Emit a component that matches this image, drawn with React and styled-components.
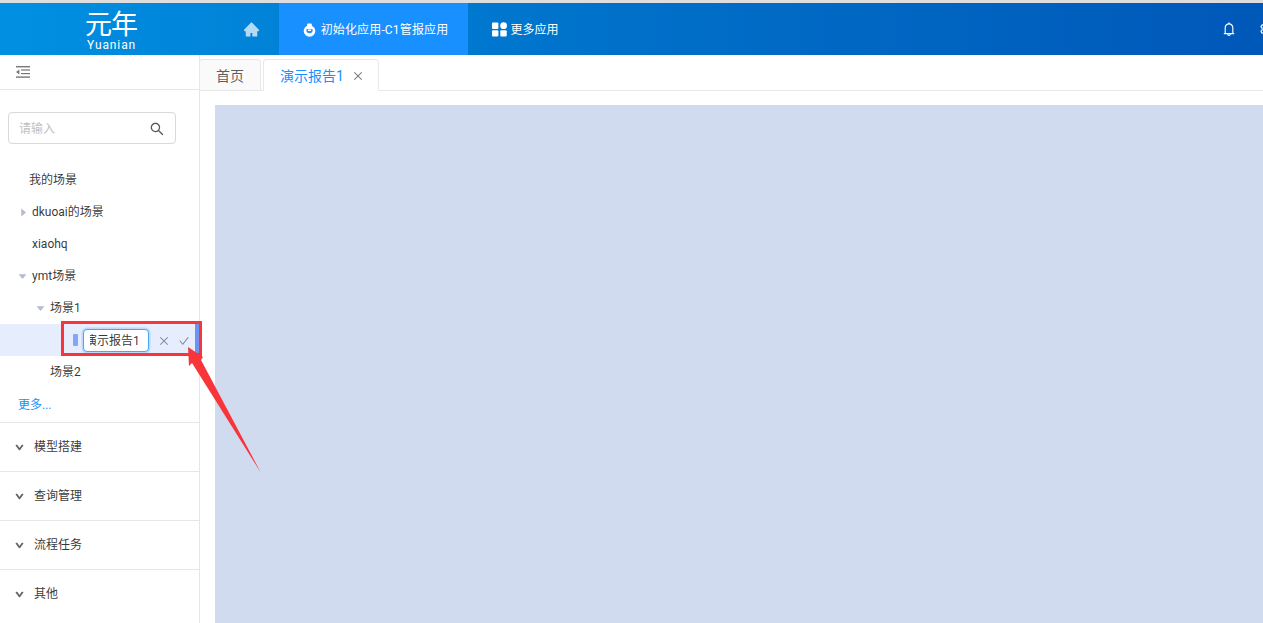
import React from 'react';
import styled, { createGlobalStyle } from 'styled-components';
import {
  AiFillHome,
  AiOutlineBell,
  AiOutlineCheck,
  AiOutlineClose,
  AiOutlineDown,
  AiOutlineSearch,
  AiOutlineSetting,
  AiFillCaretRight,
  AiFillCaretDown,
} from 'react-icons/ai';

const GlobalStyle = createGlobalStyle`
  html, body {
    margin: 0;
    padding: 0;
    height: 100%;
    overflow: hidden;
    background: #fff;
  }
  body {
    font-family: "Roboto", "Noto Sans CJK SC", sans-serif;
    font-size: 12px;
    line-height: 20px;
    color: rgba(0, 0, 0, 0.8);
  }
  * {
    box-sizing: border-box;
  }
`;

const Page = styled.div`
  position: relative;
  width: 1263px;
  height: 623px;
  overflow: hidden;
  display: flex;
  flex-direction: column;
  border-top: 3px solid #dedede;
`;

const Header = styled.header`
  flex: none;
  height: 52px;
  display: flex;
  align-items: stretch;
  color: #fff;
  background: linear-gradient(90deg, #0090e2 0%, #0070c9 50%, #0058b9 100%);
`;

const Logo = styled.svg`
  width: 229px;
  height: 52px;
  flex: none;
  display: block;
  fill: #fff;
`;

const NavItem = styled.div`
  display: flex;
  align-items: center;
  justify-content: center;
  gap: ${(p) => p.$gap || 5}px;
  width: ${(p) => p.$width}px;
  padding: 1px 0 0 ${(p) => (p.$active ? 4 : 0)}px;
  background: ${(p) => (p.$active ? '#1890ff' : 'transparent')};
  color: #fff;
  font-size: 12px;
  letter-spacing: ${(p) => (p.$active ? 0.15 : 0)}px;
  svg {
    flex: none;
  }
`;

const HomeIcon = styled(AiFillHome)`
  color: #b3dbf5;
  font-size: 17px;
  margin-right: 6px;
`;

const HeaderRight = styled.div`
  margin-left: auto;
  display: flex;
  align-items: center;
  gap: 22px;
  width: 42px;
  overflow: hidden;
  font-size: 16px;
  svg {
    flex: none;
  }
`;

const Body = styled.div`
  flex: 1;
  min-height: 0;
  display: flex;
`;

const Sidebar = styled.aside`
  flex: none;
  width: 200px;
  border-right: 1px solid #e6e6ea;
  display: flex;
  flex-direction: column;
`;

const SideToolbar = styled.div`
  flex: none;
  height: 35px;
  display: flex;
  align-items: center;
  padding-left: 16px;
  border-bottom: 1px solid #e6e6e6;
`;

const SearchBox = styled.div`
  flex: none;
  width: 168px;
  height: 32px;
  margin: 22px 0 20px 8px;
  padding: 1px 10px 0;
  display: flex;
  align-items: center;
  justify-content: space-between;
  border: 1px solid #d9d9d9;
  border-radius: 4px;
  color: #bfbfbf;
  svg {
    color: #555;
    font-size: 16px;
  }
`;

const TreeRow = styled.div`
  position: relative;
  height: 32px;
  display: flex;
  align-items: center;
  padding-left: ${(p) => p.$indent}px;
  background: ${(p) => (p.$selected ? '#e6edfc' : 'transparent')};
`;

const Caret = styled.span`
  width: ${(p) => p.$width}px;
  flex: none;
  display: flex;
  align-items: center;
  color: #b4bccb;
  font-size: 11px;
`;

const SelectedBar = styled.span`
  position: absolute;
  top: 0;
  right: 0;
  bottom: 0;
  width: 4px;
  background: #6f94f0;
`;

const Handle = styled.span`
  width: 5px;
  height: 12px;
  background: #85a5f5;
  border-radius: 1px;
  margin-right: 5px;
`;

const RenameInput = styled.input`
  width: 66px;
  height: 23px;
  padding: 0 2px 2px 6px;
  border: 1px solid #40a9ff;
  border-radius: 4px;
  box-shadow: 0 0 0 1.5px rgba(24, 144, 255, 0.2);
  outline: none;
  font: inherit;
  color: rgba(0, 0, 0, 0.8);
  text-indent: -5px;
  background: #fff;
`;

const RowAction = styled.span`
  display: flex;
  align-items: center;
  color: #7f8ba3;
  font-size: 12px;
  margin-left: ${(p) => p.$gap}px;
  margin-top: 2px;
`;

const MoreLink = styled.a`
  height: 34px;
  padding-left: 18px;
  display: flex;
  align-items: center;
  color: #1890ff;
  flex: none;
`;

const Section = styled.div`
  flex: none;
  height: 49px;
  padding-left: 15px;
  display: flex;
  align-items: center;
  gap: 10px;
  border-top: 1px solid #e6e6ea;
  svg {
    color: #666;
    font-size: 9px;
    stroke: #666;
    stroke-width: 120;
  }
`;

const Main = styled.main`
  flex: 1;
  min-width: 0;
  display: flex;
  flex-direction: column;
`;

const TabBar = styled.div`
  flex: none;
  height: 36px;
  padding-top: 4px;
  margin-left: -1px;
  display: flex;
  align-items: flex-end;
  gap: 2px;
  border-bottom: 1px solid #e8e8e8;
`;

const Tab = styled.div`
  height: ${(p) => (p.$active ? 32 : 31)}px;
  width: ${(p) => p.$width}px;
  margin-bottom: ${(p) => (p.$active ? -1 : 0)}px;
  padding: 2px 0 0 16px;
  display: flex;
  align-items: center;
  gap: 8px;
  font-size: 14px;
  border: 1px solid #e8e8e8;
  border-bottom: ${(p) => (p.$active ? '1px solid #fff' : '0')};
  border-radius: 4px 4px 0 0;
  background: ${(p) => (p.$active ? '#fff' : '#fafafa')};
  color: ${(p) => (p.$active ? '#1890ff' : 'rgba(0, 0, 0, 0.65)')};
  svg {
    color: #777;
    font-size: 12px;
  }
`;

const Content = styled.div`
  flex: 1;
  min-height: 0;
  padding: 14px 0 0 15px;
`;

const Canvas = styled.div`
  height: 100%;
  background: #d0dbef;
`;

const RedBox = styled.div`
  position: absolute;
  left: 61px;
  top: 318px;
  width: 141px;
  height: 35px;
  border: 3px solid #f8353a;
`;

const Arrow = styled.svg`
  position: absolute;
  left: 0;
  top: -3px;
  width: 1263px;
  height: 623px;
  pointer-events: none;
`;

const CollapseIcon = () => (
  <svg width="14" height="12" viewBox="0 0 14 12" fill="#777">
    <rect x="0" y="0" width="14" height="1.4" />
    <rect x="5" y="3.4" width="9" height="1.2" />
    <rect x="5" y="7" width="9" height="1.2" />
    <rect x="0" y="10.4" width="14" height="1.4" />
    <path d="M3.4 3.4v5L0 5.9z" />
  </svg>
);

const PotIcon = () => (
  <svg width="13" height="14" viewBox="0 0 13 14" fill="#fff">
    <rect x="4" y="0.5" width="5" height="3" rx="1.4" />
    <circle cx="6.5" cy="8" r="5.8" />
    <path d="M3.4 6.2h6.2v1.4a3.1 2.6 0 0 1-6.2 0z" fill="#1890ff" />
    <rect x="5" y="6.6" width="3" height="1.4" />
  </svg>
);

const AppsIcon = () => (
  <svg width="15" height="15" viewBox="0 0 15 15" fill="#fff">
    <rect x="0" y="0.5" width="6.4" height="6.4" rx="1" />
    <circle cx="11.6" cy="3.7" r="3.4" />
    <rect x="0" y="8.2" width="6.4" height="6.4" rx="1" />
    <rect x="8.3" y="8.2" width="6.4" height="6.4" rx="1" />
  </svg>
);

const treeRows = [
  { label: '我的场景', indent: 29 },
  { label: 'dkuoai的场景', indent: 18, caret: 'right', caretWidth: 14 },
  { label: 'xiaohq', indent: 32 },
  { label: 'ymt场景', indent: 17, caret: 'down', caretWidth: 15 },
  { label: '场景1', indent: 35, caret: 'down', caretWidth: 15 },
  { editing: true, indent: 73 },
  { label: '场景2', indent: 50 },
];

const sections = ['模型搭建', '查询管理', '流程任务', '其他'];

function App() {
  return (
    <Page>
      <GlobalStyle />
      <Header>
        <Logo viewBox="0 0 229 52">
          <text x="85" y="31" fontSize="27" fontFamily="'Noto Sans CJK SC', sans-serif" letterSpacing="-1">
            元年
          </text>
          <text x="87" y="46" fontSize="12" fontFamily="Roboto, sans-serif" letterSpacing="0.9">
            Yuanian
          </text>
        </Logo>
        <NavItem $width={50}>
          <HomeIcon />
        </NavItem>
        <NavItem $width={189} $active>
          <PotIcon />
          初始化应用-C1管报应用
        </NavItem>
        <NavItem $width={115} $gap={3}>
          <AppsIcon />
          更多应用
        </NavItem>
        <HeaderRight>
          <AiOutlineBell />
          <AiOutlineSetting />
        </HeaderRight>
      </Header>
      <Body>
        <Sidebar>
          <SideToolbar>
            <CollapseIcon />
          </SideToolbar>
          <SearchBox>
            请输入
            <AiOutlineSearch />
          </SearchBox>
          {treeRows.map((row) =>
            row.editing ? (
              <TreeRow key="editing" $indent={row.indent} $selected>
                <Handle />
                <RenameInput readOnly value="演示报告1" />
                <RowAction $gap={9}>
                  <AiOutlineClose />
                </RowAction>
                <RowAction $gap={8}>
                  <AiOutlineCheck />
                </RowAction>
                <SelectedBar />
              </TreeRow>
            ) : (
              <TreeRow key={row.label} $indent={row.indent}>
                {row.caret && (
                  <Caret $width={row.caretWidth}>
                    {row.caret === 'right' ? <AiFillCaretRight /> : <AiFillCaretDown />}
                  </Caret>
                )}
                {row.label}
              </TreeRow>
            ),
          )}
          <MoreLink>更多...</MoreLink>
          {sections.map((name) => (
            <Section key={name}>
              <AiOutlineDown />
              {name}
            </Section>
          ))}
        </Sidebar>
        <Main>
          <TabBar>
            <Tab $width={62}>首页</Tab>
            <Tab $width={116} $active>
              演示报告1
              <AiOutlineClose />
            </Tab>
          </TabBar>
          <Content>
            <Canvas />
          </Content>
        </Main>
      </Body>
      <RedBox />
      <Arrow viewBox="0 0 1263 623">
        <polygon
          fill="#f8353a"
          points="188,347 203,357 201,360 261,473 192,363 189,366"
        />
      </Arrow>
    </Page>
  );
}

export default App;
